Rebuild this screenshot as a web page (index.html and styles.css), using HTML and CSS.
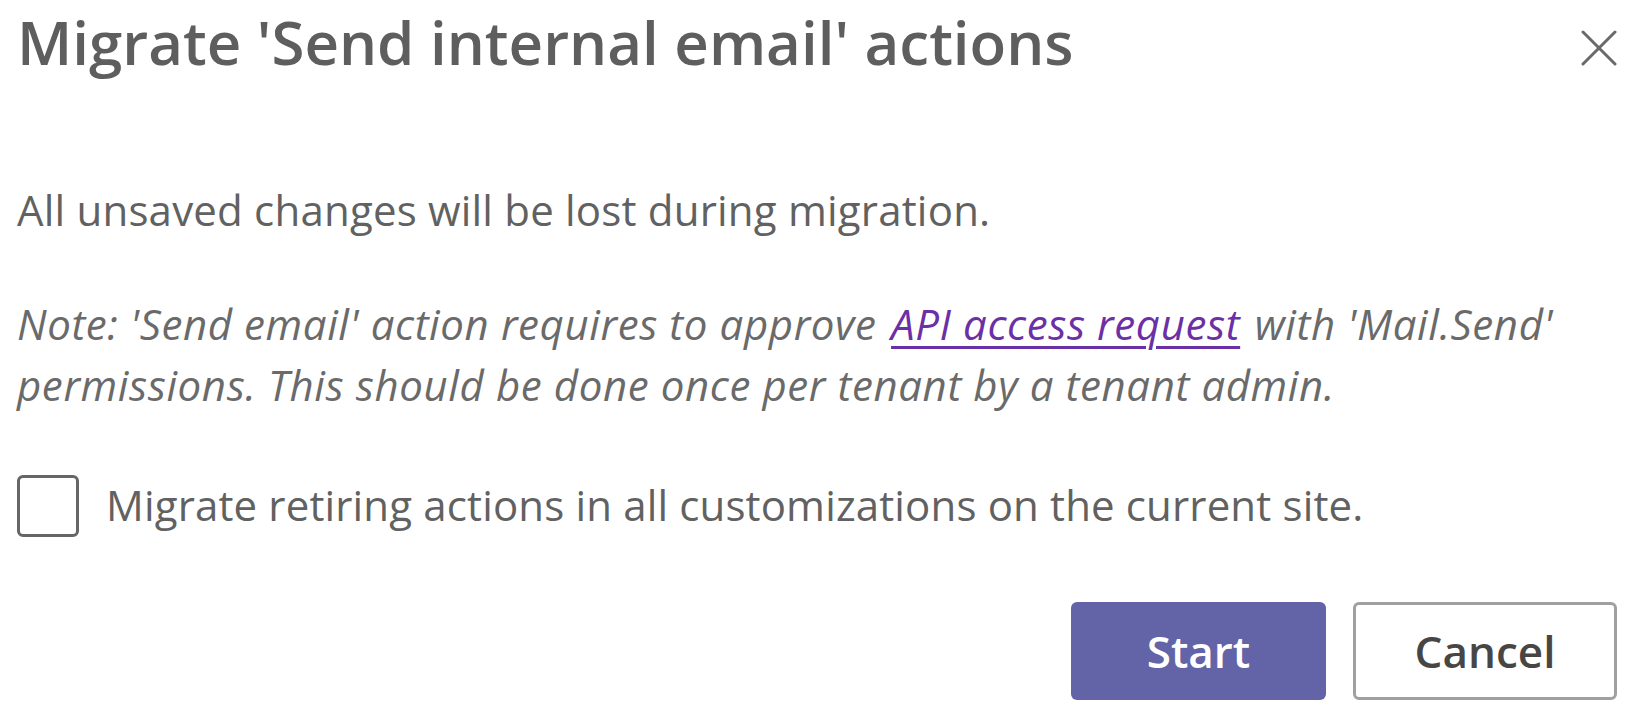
FILE: index.html
```html
<!DOCTYPE html>
<html lang="en">
<head>
<meta charset="utf-8">
<title>Migrate 'Send internal email' actions</title>
<link rel="stylesheet" href="styles.css">
</head>
<body>
<div class="dialog">
  <div class="header">
    <h1 class="title">Migrate 'Send internal email' actions</h1>
    <button class="close" aria-label="Close">
      <svg viewBox="0 0 36 36" width="36" height="36"><path d="M2 2 L34 34 M34 2 L2 34" stroke="#6a6a6a" stroke-width="3" stroke-linecap="round" fill="none"/></svg>
    </button>
  </div>
  <p class="text">All unsaved changes will be lost during migration.</p>
  <p class="note"><span>Note: 'Send email' action requires to approve</span> <a href="#" class="link">API access request</a> <span>with 'Mail.Send'</span><br><span>permissions. This should be done once per tenant by a tenant admin.</span></p>
  <label class="check-row">
    <span class="box"></span>
    <span class="check-label">Migrate retiring actions in all customizations on the current site.</span>
  </label>
  <div class="actions">
    <button class="btn primary">Start</button>
    <button class="btn secondary">Cancel</button>
  </div>
</div>
</body>
</html>
```
FILE: styles.css
```css
html, body {
  margin: 0;
  padding: 0;
  background: #ffffff;
}
body {
  font-family: "Segoe UI", "Open Sans", "Noto Sans", sans-serif;
  color: #616161;
}
.dialog {
  padding: 2px 19px 0 17px;
  display: flex;
  flex-direction: column;
}
.header {
  display: flex;
  justify-content: space-between;
  align-items: flex-start;
}
.title {
  margin: 0;
  font-size: 60px;
  font-weight: 600;
  line-height: 80px;
  color: #5e5e5e;
}
.close {
  margin-top: 28px;
  padding: 0;
  border: 0;
  background: none;
  width: 36px;
  height: 36px;
  display: flex;
}
.text {
  margin: 98px 0 0;
  font-size: 42px;
  line-height: 60px;
  letter-spacing: 0.2px;
}
.note {
  margin: 53px 0 0;
  font-size: 42px;
  line-height: 61px;
  font-style: italic;
  letter-spacing: 0.6px;
  color: #6a6a6a;
}
.link {
  display: inline-block;
  margin: 0 3px;
  line-height: 50px;
  color: #6b2fa6;
  text-decoration: underline;
  text-decoration-thickness: 3px;
  text-underline-offset: 6px;
}
.check-row {
  margin-top: 60px;
  display: flex;
  align-items: flex-start;
  gap: 27px;
}
.box {
  flex: none;
  width: 56px;
  height: 56px;
  border: 3px solid #666666;
  border-radius: 6px;
}
.check-label {
  font-size: 42px;
  line-height: 60px;
  letter-spacing: 0.15px;
}
.actions {
  margin-top: 65px;
  display: flex;
  justify-content: flex-end;
  gap: 27px;
}
.btn {
  height: 98px;
  border-radius: 6px;
  font-family: "Segoe UI", "Open Sans", "Noto Sans", sans-serif;
  font-size: 44px;
  font-weight: 600;
  padding: 0;
}
.primary {
  width: 255px;
  background: #6264a7;
  color: #ffffff;
  border: 0;
}
.secondary {
  width: 264px;
  background: #ffffff;
  color: #484644;
  border: 3px solid #a0a0a0;
}
```
